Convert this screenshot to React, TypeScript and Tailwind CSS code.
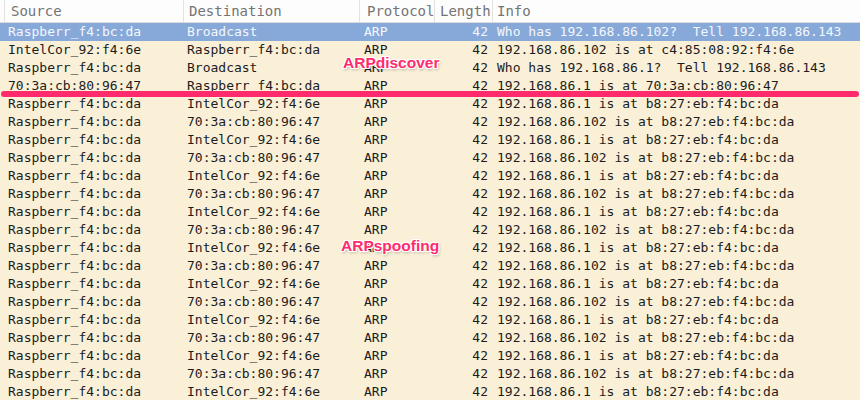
import React from "react";

type Packet = {
    src: string;
    dst: string;
    proto: string;
    len: number;
    info: string;
};

const PI = "Raspberr_f4:bc:da";
const INTEL = "IntelCor_92:f4:6e";
const ROUTER = "70:3a:cb:80:96:47";

const head: Packet[] = [
    { src: PI, dst: "Broadcast", proto: "ARP", len: 42, info: "Who has 192.168.86.102?  Tell 192.168.86.143" },
    { src: INTEL, dst: PI, proto: "ARP", len: 42, info: "192.168.86.102 is at c4:85:08:92:f4:6e" },
    { src: PI, dst: "Broadcast", proto: "ARP", len: 42, info: "Who has 192.168.86.1?  Tell 192.168.86.143" },
    { src: ROUTER, dst: PI, proto: "ARP", len: 42, info: "192.168.86.1 is at 70:3a:cb:80:96:47" },
];

// the spoofed replies alternate between the two victims
const spoof: Packet[] = Array.from({ length: 17 }, (_, i) =>
    i % 2 === 0
        ? { src: PI, dst: INTEL, proto: "ARP", len: 42, info: "192.168.86.1 is at b8:27:eb:f4:bc:da" }
        : { src: PI, dst: ROUTER, proto: "ARP", len: 42, info: "192.168.86.102 is at b8:27:eb:f4:bc:da" }
);

const packets = [...head, ...spoof];

const label =
    "absolute leading-none font-['Liberation_Sans',Arial,sans-serif] font-bold text-[15.5px] text-[#ff2b6c] [text-shadow:1px_0_0_#fff,-1px_0_0_#fff,0_1px_0_#fff,0_-1px_0_#fff,1px_1px_0_#fff,-1px_-1px_0_#fff,1px_-1px_0_#fff,-1px_1px_0_#fff,1px_2px_3px_rgba(0,0,0,0.3)]";

export default function App() {
    return (
        <div className="relative w-[860px] h-[400px] overflow-hidden bg-[#faf0d8] font-['DejaVu_Sans_Mono',monospace] text-[13px]">
            {/* column header */}
            <div className="flex h-[23px] items-center bg-[#fdfdfd] border-b border-[#dcdcdc] text-[14px] text-[#747474] whitespace-nowrap">
                <div className="ml-[4px] w-[179px] h-full flex items-center pl-[6px] border-l border-[#e2e2e2]">Source</div>
                <div className="w-[176px] h-full flex items-center pl-[5px] border-l border-[#e2e2e2]">Destination</div>
                <div className="w-[75px] h-full flex items-center pl-[7px] border-l border-[#e2e2e2] overflow-hidden">Protocol</div>
                <div className="w-[58px] h-full flex items-center pl-[5px] border-l border-[#e2e2e2] overflow-hidden">Length</div>
                <div className="flex-1 h-full flex items-center pl-[4px] border-l border-[#e2e2e2]">Info</div>
            </div>

            {packets.map((p, i) => (
                <div
                    key={i}
                    className={
                        i === 0
                            ? "flex h-[18px] items-center whitespace-pre bg-[#87a9d9] text-[#f4f7fc]"
                            : "flex h-[18px] items-center whitespace-pre text-[#1c1c1c]"
                    }
                >
                    <div className="w-[183px] pl-[8px]">{p.src}</div>
                    <div className="w-[176px] pl-[4px]">{p.dst}</div>
                    <div className="w-[76px] pl-[5px]">{p.proto}</div>
                    <div className="w-[53px] text-right">{p.len}</div>
                    <div className="flex-1 pl-[9px]">{p.info}</div>
                </div>
            ))}

            {/* annotations */}
            <div className="absolute left-[1px] top-[91px] w-[858px] h-[6px] rounded-full bg-[#ff2b6c]" />
            <div className={label + " left-[343px] top-[55px]"}>ARPdiscover</div>
            <div className={label + " left-[341px] top-[238px]"}>ARPspoofing</div>
        </div>
    );
}
